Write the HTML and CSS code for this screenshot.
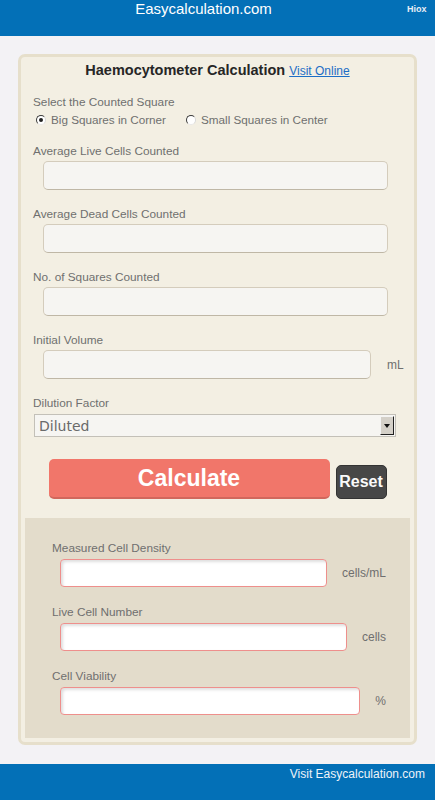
FILE: index.html
```html
<!DOCTYPE html>
<html lang="en">
<head>
<meta charset="utf-8">
<title>Haemocytometer Calculation</title>
<link rel="stylesheet" href="styles.css">
</head>
<body>
<header class="top">
  <span class="brand">Easycalculation.com</span>
  <span class="hiox">Hiox</span>
</header>

<main class="card">
  <h1 class="title">Haemocytometer Calculation <a class="visit" href="#">Visit Online</a></h1>

  <div class="label">Select the Counted Square</div>
  <div class="radios">
    <label class="radio"><span class="dot checked"></span>Big Squares in Corner</label>
    <label class="radio"><span class="dot"></span>Small Squares in Center</label>
  </div>

  <div class="field">
    <div class="label">Average Live Cells Counted</div>
    <input class="inp" type="text">
  </div>
  <div class="field">
    <div class="label">Average Dead Cells Counted</div>
    <input class="inp" type="text">
  </div>
  <div class="field">
    <div class="label">No. of Squares Counted</div>
    <input class="inp" type="text">
  </div>
  <div class="field field-shift">
    <div class="label">Initial Volume</div>
    <div class="unit-row">
      <input class="inp inp-short" type="text">
      <span class="unit unit-ml">mL</span>
    </div>
  </div>
  <div class="field field-select">
    <div class="label">Dilution Factor</div>
    <div class="select-wrap">
      <select class="sel"><option>Diluted</option></select>
      <span class="sel-btn"><span class="tri"></span></span>
    </div>
  </div>

  <div class="buttons">
    <button class="calc" type="button">Calculate</button>
    <button class="reset" type="button">Reset</button>
  </div>

  <section class="results">
    <div class="rfield">
      <div class="label">Measured Cell Density</div>
      <div class="rrow">
        <input class="rinp" type="text">
        <span class="unit">cells/mL</span>
      </div>
    </div>
    <div class="rfield">
      <div class="label">Live Cell Number</div>
      <div class="rrow">
        <input class="rinp" type="text">
        <span class="unit">cells</span>
      </div>
    </div>
    <div class="rfield rfield-last">
      <div class="label">Cell Viability</div>
      <div class="rrow">
        <input class="rinp" type="text">
        <span class="unit">%</span>
      </div>
    </div>
  </section>
</main>

<footer class="bottom">
  <a class="foot-link" href="#">Visit Easycalculation.com</a>
</footer>
</body>
</html>
```

FILE: styles.css
```css
* { box-sizing: border-box; }

html, body {
  margin: 0;
  padding: 0;
}

body {
  background: #f3f2f5;
  font-family: "Liberation Sans", Arial, sans-serif;
  color: #6f6f6f;
  width: 435px;
}

.top {
  height: 36px;
  background: #0370b7;
  display: grid;
  grid-template-columns: 1fr 28px;
  align-items: start;
}

.brand {
  text-align: center;
  color: #fff;
  font-size: 15px;
  line-height: 18px;
}

.hiox {
  color: #e8eef6;
  font-size: 9px;
  font-weight: bold;
  line-height: 18px;
  text-align: right;
  padding-right: 10px;
}

.card {
  margin: 18px 18px 0 18px;
  width: 399px;
  background: #f3efe3;
  border: 3px solid #e6dfcb;
  border-radius: 7px;
  padding: 3px 4px 4px 4px;
}

.title {
  margin: 0 0 13px 0;
  text-align: center;
  font-size: 14.5px;
  line-height: 20px;
  font-weight: bold;
  color: #262626;
}

.visit {
  font-size: 12px;
  font-weight: normal;
  color: #1d6ec6;
  text-decoration: underline;
}

.label {
  font-size: 11.8px;
  line-height: 16px;
  color: #6f6f6f;
  padding-left: 8px;
}

.radios {
  display: flex;
  align-items: center;
  height: 19px;
  margin: 0 0 14px 11px;
  gap: 20px;
}

.radio {
  display: flex;
  align-items: center;
  font-size: 11.7px;
  color: #6f6f6f;
}

.dot {
  width: 10px;
  height: 10px;
  border-radius: 50%;
  border: 1px solid;
  border-color: #3a3a3a #d8d8d8 #e8e8e8 #3a3a3a;
  background: #fff;
  margin-right: 5px;
  display: flex;
  align-items: center;
  justify-content: center;
}

.dot.checked::after {
  content: "";
  width: 4px;
  height: 4px;
  border-radius: 50%;
  background: #222;
}

.field {
  margin-bottom: 16px;
}

.field-shift {
  margin-top: 1px;
}

.inp {
  display: block;
  margin: 2px 0 0 18px;
  width: 345px;
  height: 29px;
  background: #f6f5f2;
  border: 1px solid #d4ccbc;
  border-bottom-color: #bfb7a6;
  border-radius: 5px;
  font: inherit;
}

.unit-row {
  display: flex;
  align-items: center;
}

.inp-short {
  width: 328px;
}

.unit {
  font-size: 12px;
  color: #6f6f6f;
  margin-left: 15px;
}

.unit-ml {
  margin-left: 16px;
  margin-top: 2px;
}

.field-select {
  margin-bottom: 22px;
}

.select-wrap {
  position: relative;
  margin: 3px 0 0 9px;
  width: 362px;
  height: 23px;
}

.sel {
  appearance: none;
  -webkit-appearance: none;
  width: 100%;
  height: 23px;
  margin: 0;
  border: 1px solid #c3c0b8;
  border-radius: 0;
  background: #f6f5f2;
  color: #6a6a6a;
  font-family: "DejaVu Sans", sans-serif;
  font-size: 14px;
  padding: 0 0 0 4px;
}

.sel-btn {
  position: absolute;
  right: 2px;
  top: 2px;
  width: 14px;
  height: 19px;
  background: #d4d0c8;
  border: 1px solid;
  border-color: #f4f4f4 #202020 #202020 #f4f4f4;
  display: flex;
  align-items: center;
  justify-content: center;
  pointer-events: none;
}

.tri {
  width: 0;
  height: 0;
  border-left: 3.5px solid transparent;
  border-right: 3.5px solid transparent;
  border-top: 4px solid #111;
}

.buttons {
  display: flex;
  justify-content: center;
  align-items: flex-end;
  gap: 6px;
  margin-bottom: 19px;
}

.calc {
  width: 281px;
  height: 40px;
  background: #f1766a;
  border: none;
  border-bottom: 2px solid #d1675c;
  border-radius: 5px;
  color: #fff;
  font-family: "Liberation Sans", Arial, sans-serif;
  font-weight: bold;
  font-size: 23px;
  padding: 0;
}

.reset {
  width: 51px;
  height: 34px;
  background: #474747;
  border: 1px solid #333;
  border-radius: 5px;
  color: #fafafa;
  font-family: "Liberation Sans", Arial, sans-serif;
  font-weight: bold;
  font-size: 16px;
  padding: 0;
}

.results {
  background: #e3dccb;
  padding: 22px 24px 23px 19px;
}

.rfield {
  margin-bottom: 17px;
}

.rfield-last {
  margin-bottom: 0;
}

.rrow {
  display: flex;
  align-items: center;
  margin: 3px 0 0 16px;
}

.rinp {
  flex: 1;
  min-width: 0;
  height: 28px;
  background: #fff;
  border: 1px solid #ee8f8c;
  border-radius: 4px;
  box-shadow: inset 2px 2px 3px rgba(0, 0, 0, 0.13);
  font: inherit;
}

.rrow .unit {
  margin-left: 15px;
}

.bottom {
  margin-top: 19px;
  height: 36px;
  background: #0370b7;
  display: flex;
  justify-content: flex-end;
  align-items: flex-start;
  padding: 2px 10px 0 0;
}

.foot-link {
  color: #eef3f9;
  font-size: 12px;
  line-height: 16px;
  text-decoration: none;
}
```
